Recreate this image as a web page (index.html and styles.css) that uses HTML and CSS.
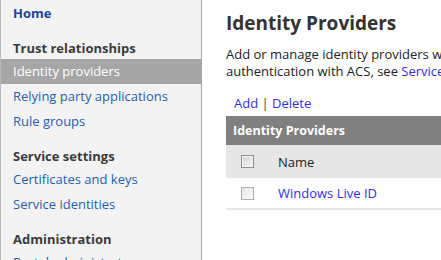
FILE: index.html
```html
<!DOCTYPE html>
<html lang="en">
<head>
  <meta charset="UTF-8">
  <title>Identity Providers - Access Control Service</title>
  <link rel="stylesheet" href="styles.css">
</head>
<body>
  <div class="layout">
    <!-- Left navigation -->
    <div class="sidebar">
      <a class="home" href="#">Home</a>
      <div class="group">
        <h3>Trust relationships</h3>
        <a class="nav-link selected" href="#">Identity providers</a>
        <a class="nav-link" href="#">Relying party applications</a>
        <a class="nav-link" href="#">Rule groups</a>
      </div>
      <div class="group">
        <h3>Service settings</h3>
        <a class="nav-link" href="#">Certificates and keys</a>
        <a class="nav-link" href="#">Service identities</a>
      </div>
      <div class="group">
        <h3>Administration</h3>
        <a class="nav-link" href="#">Portal administrators</a>
      </div>
    </div>

    <div class="content">
      <h1>Identity Providers</h1>
      <p class="intro">Add or manage identity providers with which to authenticate users. For help with configuring authentication with ACS, see <a href="#">Service Bus and Access Control documentation</a>.</p>
      <div class="actions">
        <a href="#">Add</a> | <a href="#">Delete</a>
      </div>
      <div class="grid">
        <div class="grid-title">Identity Providers</div>
        <div class="grid-head">
          <span class="check"><input type="checkbox" class="box head-box"></span>
          <span>Name</span>
        </div>
        <div class="grid-row">
          <span class="check"><input type="checkbox" class="box"></span>
          <a href="#">Windows Live ID</a>
        </div>
      </div>
    </div>
  </div>
</body>
</html>
```

FILE: styles.css
```css
* { margin: 0; padding: 0; box-sizing: border-box; }
html, body { height: 100%; overflow: hidden; }
body { font-family: 'Open Sans', 'Noto Sans', sans-serif; font-size: 13px; color: #222; background: #fff; }
a { text-decoration: none; }
.layout { display: flex; height: 100%; }

/* Sidebar */
.sidebar {
  width: 202px;
  flex-shrink: 0;
  background-color: #f3f3f3;
  border-left: 1px solid #b9b9b9;
  border-right: 1px solid #a3a3a3;
  padding-top: 1px;
  white-space: nowrap;
}
.sidebar a { display: block; padding-left: 12px; line-height: 25px; }
.sidebar .home { color: #1c449c; font-weight: bold; }
.group { margin-top: 11px; }
.group h3 { font-size: 13px; line-height: 22px; color: #3b3b3b; padding-left: 12px; }
.nav-link { color: #2a5cae; }
.nav-link.selected { background-color: #a6a6a6; color: #fff; }

/* Main content */
.content { flex: 1; padding: 10px 0 0 24px; min-width: 0; }
.content h1 { font-size: 19px; line-height: 26px; color: #333; font-weight: bold; white-space: nowrap; }
.intro { margin-top: 10px; line-height: 17px; width: 640px; }
.content a { color: #2f2fe6; }
.actions { margin-top: 13px; padding-left: 8px; line-height: 20px; color: #444; }
.grid { margin-top: 3px; width: 600px; }
.grid-title {
  background-color: #808080;
  color: #fff;
  font-weight: bold;
  font-size: 12.5px;
  height: 29px;
  line-height: 29px;
  padding-left: 7px;
}
.grid-head, .grid-row { display: flex; align-items: center; }
.grid-head { background-color: #e6e6e6; height: 33px; }
.grid-row { height: 32px; border-bottom: 2px solid #e6e6e6; }
.check { width: 52px; padding-left: 15px; display: flex; }
.box {
  appearance: none;
  width: 13px;
  height: 13px;
  margin: 0;
  border: 1px solid #adadad;
  background: linear-gradient(135deg, #e6e6e6, #fbfbfb);
}
.head-box {
  border-color: #8e8e8e;
  box-shadow: inset 0 0 0 1px #f4f4f4;
  background: linear-gradient(135deg, #cfd3da, #f6f6f6);
}
```
